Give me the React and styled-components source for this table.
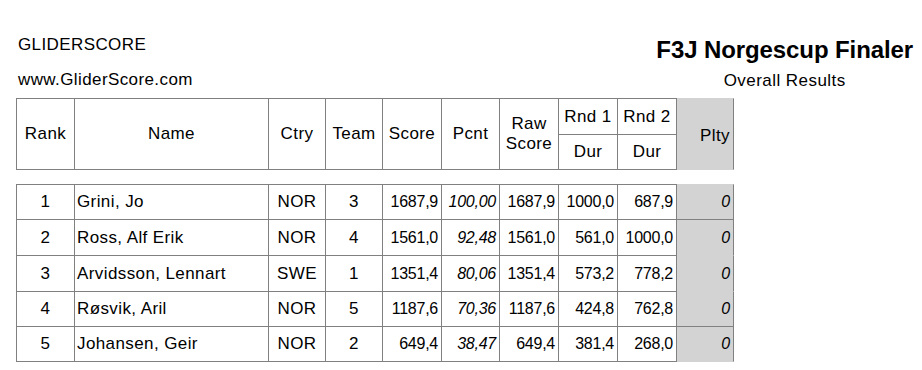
import React from "react";
import styled, { createGlobalStyle } from "styled-components";

const LINE = "#808080";
const GREY = "#d3d3d3";

const GlobalStyle = createGlobalStyle`
  html, body {
    margin: 0;
    padding: 0;
    background: #fff;
  }
  body {
    font-family: "Liberation Sans", Arial, sans-serif;
    color: #000;
  }
`;

const results = [
  { rank: 1, name: "Grini, Jo", ctry: "NOR", team: 3, score: "1687,9", pcnt: "100,00", raw: "1687,9", r1: "1000,0", r2: "687,9", plty: "0", line: true },
  { rank: 2, name: "Ross, Alf Erik", ctry: "NOR", team: 4, score: "1561,0", pcnt: "92,48", raw: "1561,0", r1: "561,0", r2: "1000,0", plty: "0" },
  { rank: 3, name: "Arvidsson, Lennart", ctry: "SWE", team: 1, score: "1351,4", pcnt: "80,06", raw: "1351,4", r1: "573,2", r2: "778,2", plty: "0" },
  { rank: 4, name: "Røsvik, Aril", ctry: "NOR", team: 5, score: "1187,6", pcnt: "70,36", raw: "1187,6", r1: "424,8", r2: "762,8", plty: "0", line: true },
  { rank: 5, name: "Johansen, Geir", ctry: "NOR", team: 2, score: "649,4", pcnt: "38,47", raw: "649,4", r1: "381,4", r2: "268,0", plty: "0" },
];

const App = () => {
  return (
    <Page>
      <GlobalStyle />
      <TopBar>
        <LeftCol>
          <Brand>GLIDERSCORE</Brand>
          <Site>www.GliderScore.com</Site>
        </LeftCol>
        <RightCol>
          <Title>F3J Norgescup Finaler</Title>
          <Subtitle>Overall Results</Subtitle>
        </RightCol>
      </TopBar>

      <HeadGrid>
        <Cell $span={2} $left $top>Rank</Cell>
        <Cell $span={2} $top>Name</Cell>
        <Cell $span={2} $top>Ctry</Cell>
        <Cell $span={2} $top>Team</Cell>
        <Cell $span={2} $top>Score</Cell>
        <Cell $span={2} $top>Pcnt</Cell>
        <Cell $span={2} $top>
          <TwoLine>
            Raw
            <br />
            Score
          </TwoLine>
        </Cell>
        <Cell $top>Rnd 1</Cell>
        <Cell $top>Rnd 2</Cell>
        <Cell $span={2} $top $grey $align="right">
          <Shift>Plty</Shift>
        </Cell>
        <Cell>Dur</Cell>
        <Cell>Dur</Cell>
      </HeadGrid>

      <DataGrid>
        {results.map((r, i) => (
          <React.Fragment key={r.rank}>
            <Cell $left $top={i === 0}>{r.rank}</Cell>
            <Cell $top={i === 0} $align="left">{r.name}</Cell>
            <Cell $top={i === 0}>{r.ctry}</Cell>
            <Cell $top={i === 0}>{r.team}</Cell>
            <Cell $top={i === 0} $align="right" $num>{r.score}</Cell>
            <Cell $top={i === 0} $align="right" $num $italic>{r.pcnt}</Cell>
            <Cell $top={i === 0} $align="right" $num>{r.raw}</Cell>
            <Cell $top={i === 0} $align="right" $num>{r.r1}</Cell>
            <Cell $top={i === 0} $align="right" $num>{r.r2}</Cell>
            <Cell $top={i === 0} $align="right" $num $italic $grey $line={r.line}>
              {r.plty}
            </Cell>
          </React.Fragment>
        ))}
      </DataGrid>
    </Page>
  );
};

const Page = styled.div`
  width: 922px;
  box-sizing: border-box;
  padding: 36px 9px 0 16px;
`;

const TopBar = styled.div`
  display: flex;
  justify-content: space-between;
  align-items: flex-start;
  height: 62px;
`;

const LeftCol = styled.div`
  display: flex;
  flex-direction: column;
  padding-left: 2px;
`;

const Brand = styled.div`
  font-size: 17px;
  line-height: 18px;
  letter-spacing: 0.4px;
`;

const Site = styled(Brand)`
  margin-top: 17px;
`;

const RightCol = styled.div`
  display: flex;
  flex-direction: column;
  align-items: center;
`;

const Title = styled.div`
  font-size: 24px;
  font-weight: bold;
  line-height: 28px;
  letter-spacing: -0.1px;
`;

const Subtitle = styled.div`
  font-size: 17px;
  line-height: 18px;
  letter-spacing: 0.45px;
  margin-top: 8px;
`;

const columns = "59px 194px 57px 57px 59px 58px 59px 59px 59px 57px";

const HeadGrid = styled.div`
  display: grid;
  grid-template-columns: ${columns};
  grid-template-rows: 37px 35px;
`;

const DataGrid = styled.div`
  display: grid;
  grid-template-columns: ${columns};
  grid-template-rows: 36px 36px 36px 35px 35px;
  margin-top: 14px;
`;

const Cell = styled.div`
  box-sizing: border-box;
  display: flex;
  align-items: center;
  justify-content: ${(p) =>
    p.$align === "left" ? "flex-start" : p.$align === "right" ? "flex-end" : "center"};
  grid-row: ${(p) => (p.$span ? `span ${p.$span}` : "auto")};
  padding: ${(p) =>
    p.$align === "left" ? "0 0 0 2px" : p.$align === "right" ? "0 3px 0 0" : "0"};
  font-size: ${(p) => (p.$num ? "16px" : "17px")};
  letter-spacing: ${(p) => (p.$num ? "-0.25px" : "0.4px")};
  font-style: ${(p) => (p.$italic ? "italic" : "normal")};
  text-align: center;
  white-space: nowrap;
  background: ${(p) => (p.$grey ? GREY : "#fff")};
  border-right: 1px solid ${LINE};
  border-bottom: 1px solid ${(p) => (p.$grey && !p.$line ? GREY : LINE)};
  border-left: ${(p) => (p.$left ? `1px solid ${LINE}` : "none")};
  border-top: ${(p) => (p.$top ? `1px solid ${p.$grey ? GREY : LINE}` : "none")};
`;

const TwoLine = styled.span`
  line-height: 20.5px;
`;

const Shift = styled.span`
  margin-top: 3px;
`;

export default App;
